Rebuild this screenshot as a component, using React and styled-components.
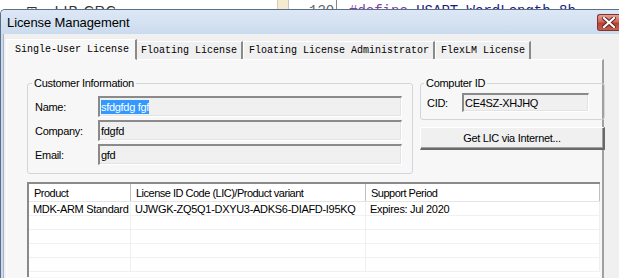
import React from "react";
import styled, { createGlobalStyle } from "styled-components";

const ui = `"Liberation Sans", Arial, sans-serif`;
const mono = `"Liberation Mono", "DejaVu Sans Mono", monospace`;

const GlobalStyle = createGlobalStyle`
  html, body { margin: 0; padding: 0; background: #fff; overflow: hidden; }
  body { width: 619px; height: 278px; }
`;

const tabs = [
  "Single-User License",
  "Floating License",
  "Floating License Administrator",
  "FlexLM License",
];

const customer = [
  { label: "Name:", value: "sfdgfdg fgf", selected: true },
  { label: "Company:", value: "fdgfd" },
  { label: "Email:", value: "gfd" },
];

const columns = [
  { title: "Product", width: 102 },
  { title: "License ID Code (LIC)/Product variant", width: 235 },
  { title: "Support Period", width: 234 },
];

const rows = [
  ["MDK-ARM Standard", "UJWGK-ZQ5Q1-DXYU3-ADKS6-DIAFD-I95KQ", "Expires: Jul 2020"],
  ["", "", ""],
  ["", "", ""],
  ["", "", ""],
  ["", "", ""],
];

export default function App() {
  return (
    <>
      <GlobalStyle />
      <Editor>
        <EdGutter>
          <EdTree>⊞ ◦ LIB CRC</EdTree>
        </EdGutter>
        <EdMark />
        <EdLineNo>120</EdLineNo>
        <EdCode>
          <Kw>#define</Kw> USART_WordLength_8b
        </EdCode>
      </Editor>
      <Window>
        <TitleBar>
          <Title>License Management</Title>
          <CloseButton>
            <svg width="14" height="11" viewBox="0 0 14 11">
              <path d="M2 1 L12 10 M12 1 L2 10" stroke="#5a2020" strokeWidth="4" strokeLinecap="square" />
              <path d="M2 1 L12 10 M12 1 L2 10" stroke="#fff" strokeWidth="2.2" strokeLinecap="square" />
            </svg>
          </CloseButton>
        </TitleBar>
        <Body>
          <TabStrip>
            {tabs.map((t, i) => (
              <Tab key={t} $active={i === 0}>{t}</Tab>
            ))}
          </TabStrip>
          <Panel>
            <TopRow>
              <Group $width={385}>
                <Legend>Customer Information</Legend>
                <Fields>
                  {customer.map((f) => (
                    <FieldRow key={f.label}>
                      <FieldLabel>{f.label}</FieldLabel>
                      <Field $width={304} $height={21}>
                        {f.selected ? <Selected>{f.value}</Selected> : f.value}
                      </Field>
                    </FieldRow>
                  ))}
                </Fields>
              </Group>
              <SideColumn>
                <Group $width={185} $compact>
                  <Legend>Computer ID</Legend>
                  <FieldRow>
                    <CidLabel>CID:</CidLabel>
                    <Field $width={127} $height={19}>CE4SZ-XHJHQ</Field>
                  </FieldRow>
                </Group>
                <Button>Get LIC via Internet...</Button>
              </SideColumn>
            </TopRow>
            <List>
              <HeaderRow>
                {columns.map((c) => (
                  <HeaderCell key={c.title} $width={c.width}>{c.title}</HeaderCell>
                ))}
              </HeaderRow>
              {rows.map((r, i) => (
                <Row key={i}>
                  {r.map((cell, j) => (
                    <Cell key={j} $width={columns[j].width}>{cell}</Cell>
                  ))}
                </Row>
              ))}
            </List>
          </Panel>
        </Body>
      </Window>
    </>
  );
}

const Editor = styled.div`
  display: flex;
  height: 9px;
  overflow: hidden;
  background: #fff;
  font-family: ${mono};
  font-size: 14px;
  line-height: 22px;
  color: #222;
`;

const EdGutter = styled.div`
  width: 277px;
  padding-left: 26px;
  box-sizing: border-box;
  font-family: ${ui};
`;

const EdTree = styled.span`
  color: #333;
  letter-spacing: 1px;
`;

const EdMark = styled.div`
  width: 10px;
  background: #f4ecd0;
  border-left: 1px solid #d8cfa8;
  border-right: 1px solid #c8c8c8;
`;

const EdLineNo = styled.div`
  width: 48px;
  padding-left: 20px;
  box-sizing: border-box;
  color: #666;
  border-right: 1px solid #888;
`;

const EdCode = styled.div`
  padding-left: 12px;
  color: #1a1a80;
  white-space: nowrap;
`;

const Kw = styled.span`
  color: #8040a0;
`;

const Window = styled.div`
  border-top: 1px solid #5b6f86;
  border-left: 1px solid #5b6f86;
  border-radius: 5px 0 0 0;
  background: #cbdaee;
  padding-left: 2px;
  overflow: hidden;
`;

const TitleBar = styled.div`
  display: flex;
  height: 24px;
  margin-left: -2px;
  padding-left: 6px;
  background: linear-gradient(#dde8f6, #cbdbee);
  font-family: ${ui};
`;

const Title = styled.div`
  align-self: center;
  font-size: 13px;
  color: #000;
  margin-top: 1px;
  letter-spacing: -0.1px;
`;

const CloseButton = styled.div`
  margin-left: auto;
  margin-top: 4px;
  width: 22px;
  height: 17px;
  box-sizing: border-box;
  border: 1px solid #7a3434;
  border-right: none;
  border-radius: 3px 0 0 3px;
  background: linear-gradient(#e8a093, #d0675a 45%, #b8402f 55%, #c9604c);
  display: flex;
  align-items: center;
  justify-content: center;
  padding-left: 1px;
`;

const Body = styled.div`
  background: #f0f0f0;
  border-left: 1px solid #a7b4c4;
  padding: 4px 0 0 2px;
  height: 244px;
  box-sizing: border-box;
  overflow: hidden;
  font-family: ${ui};
  font-size: 11px;
  letter-spacing: -0.3px;
  color: #000;
`;

const TabStrip = styled.div`
  display: flex;
  align-items: flex-end;
  height: 21px;
  padding-left: 2px;
`;

const Tab = styled.div`
  position: relative;
  z-index: ${(p) => (p.$active ? 2 : 1)};
  height: ${(p) => (p.$active ? 21 : 18)}px;
  margin: ${(p) => (p.$active ? "0 -2px -1px -2px" : "0")};
  padding: 0 ${(p) => (p.$active ? 6 : 4)}px 0 ${(p) => (p.$active ? 8 : 5)}px;
  box-sizing: border-box;
  display: flex;
  align-items: center;
  font-family: ${mono};
  font-size: 10px;
  letter-spacing: 0;
  color: #000;
  background: ${(p) => (p.$active ? "#f7f7f7" : "#f0f0f0")};
  border-top: 1px solid #fff;
  border-left: 1px solid #fff;
  border-right: 2px solid #8a8a8a;
  border-bottom: ${(p) => (p.$active ? "1px solid #f7f7f7" : "none")};
`;

const Panel = styled.div`
  width: 598px;
  height: 219px;
  box-sizing: border-box;
  background: #f7f7f7;
  border-top: 1px solid #fff;
  border-left: 1px solid #fff;
  border-right: 2px solid #a0a0a0;
  padding: 17px 0 0 20px;
`;

const TopRow = styled.div`
  display: flex;
  gap: 7px;
  align-items: flex-start;
`;

const Group = styled.fieldset`
  width: ${(p) => p.$width}px;
  box-sizing: border-box;
  margin: 0;
  padding: ${(p) => (p.$compact ? "3px 7px 7px 6px" : "6px 10px 8px 7px")};
  border: 1px solid #d0d6dc;
  border-radius: 3px;
`;

const Legend = styled.legend`
  padding: 0 2px;
  margin-left: -3px;
  line-height: 13px;
`;

const Fields = styled.div`
  display: flex;
  flex-direction: column;
  gap: 3px;
`;

const FieldRow = styled.div`
  display: flex;
  align-items: center;
`;

const FieldLabel = styled.div`
  width: 63px;
`;

const CidLabel = styled.div`
  width: 35px;
`;

const Field = styled.div`
  width: ${(p) => p.$width}px;
  height: ${(p) => p.$height}px;
  box-sizing: border-box;
  display: flex;
  align-items: center;
  padding-left: 1px;
  background: #f0f0f0;
  border-top: 2px solid #8a8a8a;
  border-left: 2px solid #8a8a8a;
  border-bottom: 1px solid #fff;
  border-right: 1px solid #fff;
  box-shadow: inset -1px -1px 0 #e3e3e3;
  white-space: nowrap;
`;

const Selected = styled.span`
  background: #3399ff;
  color: #fff;
  padding: 1px 0;
`;

const SideColumn = styled.div`
  display: flex;
  flex-direction: column;
  gap: 7px;
`;

const Button = styled.div`
  width: 185px;
  height: 23px;
  box-sizing: border-box;
  display: flex;
  align-items: center;
  justify-content: center;
  background: #f0f0f0;
  border-top: 1px solid #fff;
  border-left: 1px solid #fff;
  border-right: 2px solid #696969;
  border-bottom: 2px solid #696969;
  box-shadow: inset -1px -1px 0 #a0a0a0;
`;

const List = styled.div`
  margin-top: 8px;
  width: 573px;
  height: 95px;
  overflow: hidden;
  box-sizing: border-box;
  background: #fff;
  border-top: 2px solid #8a8a8a;
  border-left: 2px solid #8a8a8a;
`;

const HeaderRow = styled.div`
  display: flex;
  height: 18px;
  border-bottom: 1px solid #e5e5e5;
  box-sizing: border-box;
`;

const HeaderCell = styled.div`
  width: ${(p) => p.$width}px;
  box-sizing: border-box;
  padding-left: 5px;
  display: flex;
  align-items: center;
  border-right: 1px solid #c0c0c0;
  background: #fff;
  letter-spacing: -0.5px;
  white-space: nowrap;
`;

const Row = styled.div`
  display: flex;
  height: 14px;
  box-sizing: border-box;
  border-bottom: 1px solid #f0f0f0;
`;

const Cell = styled.div`
  width: ${(p) => p.$width}px;
  box-sizing: border-box;
  padding-left: 4px;
  display: flex;
  align-items: center;
  border-right: 1px solid #f0f0f0;
  white-space: nowrap;
`;
